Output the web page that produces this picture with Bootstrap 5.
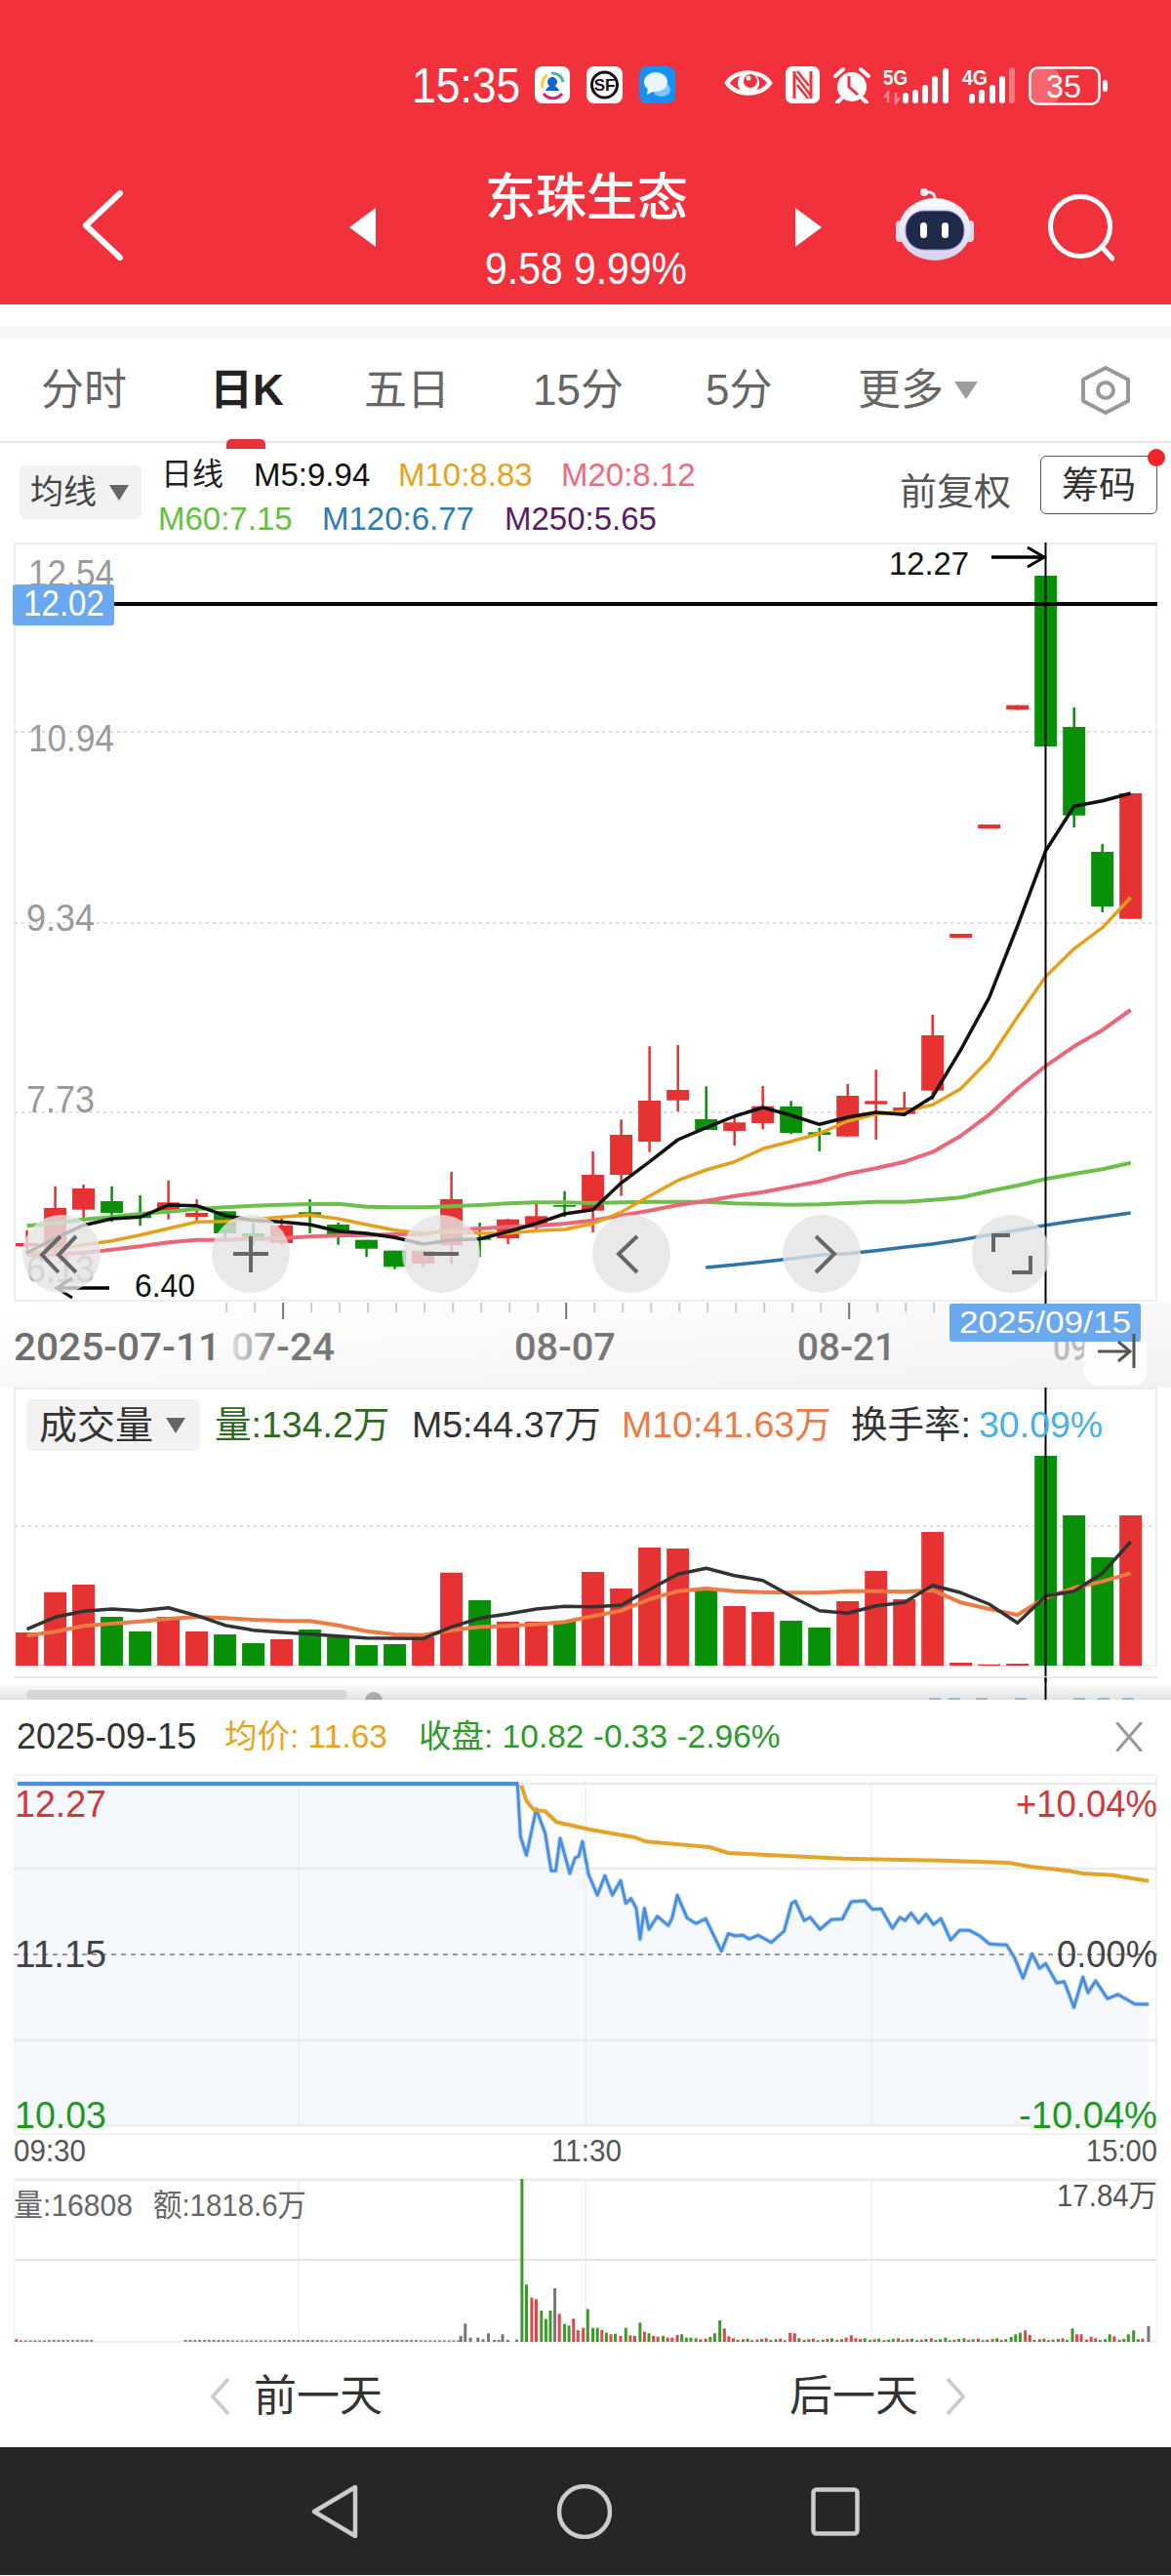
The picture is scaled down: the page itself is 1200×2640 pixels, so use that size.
<!DOCTYPE html>
<html lang="zh-CN">
<head>
<meta charset="utf-8">
<title>东珠生态</title>
<link href="https://cdn.jsdelivr.net/npm/bootstrap@5.3.0/dist/css/bootstrap.min.css" rel="stylesheet">
<style>
html,body{margin:0;background:#fff;}
body{width:1200px;height:2640px;overflow:hidden;font-family:"Liberation Sans","Noto Sans CJK SC",sans-serif;}
.app-head{height:312px;background:#f1323c;color:#fff;}
.status-row{height:40px;padding:68px 0 0 422px;box-sizing:content-box;}
.status-time{font-size:50px;line-height:40px;width:111px;white-space:nowrap;transform:scaleX(.89);transform-origin:0 50%;}
.status-icons{display:grid;grid-template-columns:53px 54px 87px 63px 48px 52px auto;margin-left:15px;}
.title-row{display:grid;grid-template-columns:274px 139px 318px 103px 156px 66px;padding-left:84px;margin-top:60px;align-items:start;}
.title-block{text-align:center;width:207px;}
.title-name{font-size:52px;line-height:70px;white-space:nowrap;font-weight:500;}
.title-price{font-size:47px;line-height:50px;margin-top:12px;white-space:nowrap;transform:scaleX(.87);transform-origin:50% 50%;margin-left:-20px;margin-right:-20px;}
.tri-off{margin-top:45px;}
.back-off{margin-top:27px;}
.robot-off{margin-top:25px;}
.search-off{margin-top:30px;}
.gap-band{background:#fff;border-bottom:13px solid #f5f5f5;box-sizing:content-box;height:22px;}
.tabs-row{display:grid;grid-template-columns:175px 156px 173px 177px 156px 99px 129px 52px;padding-left:42px;border-bottom:2px solid #e6e6e6;align-items:center;font-size:44px;color:#666;line-height:1;box-sizing:content-box;height:105px;}
.tab-on{color:#222;font-weight:700;position:relative;margin-left:-2px;}
.tab-on::after{content:"";position:absolute;left:17px;top:72px;width:40px;height:10px;border-radius:5px 5px 0 0;background:#e5333b;}
.more-tri{width:0;height:0;border-left:12px solid transparent;border-right:12px solid transparent;border-top:18px solid #9c9c9c;}
.ma-row{height:102px;padding-left:20px;position:relative;}
.ma-btn{width:125px;height:55px;margin-top:23px;background:#f2f2f2;border-radius:6px;font-size:34px;color:#444;padding-left:11px;}
.drop-tri{width:0;height:0;border-left:10px solid transparent;border-right:10px solid transparent;border-top:16px solid #666;margin-left:13px;}
.ma-lines{margin-left:20px;padding-top:10px;font-size:33px;line-height:45px;white-space:nowrap;}
.ma-a{width:95px;font-size:32px;color:#222;}
.ma-b{width:148px;color:#111;}
.ma-c{width:167px;color:#e8a21c;}
.ma-d{color:#ee6b7e;}
.ma-e{width:168px;margin-left:-3px;color:#66c040;}
.ma-f{width:187px;color:#2f7cb0;}
.ma-g{color:#5b1c62;}
.ma-fq{position:absolute;left:922px;top:25px;font-size:38px;line-height:50px;color:#555;}
.chip-btn{position:absolute;left:1066px;top:13px;width:120px;height:60px;border:1px solid #555;border-radius:6px;font-size:38px;line-height:1;color:#333;padding:0;background:#fff;}
.chip-dot{position:absolute;left:1176px;top:6px;width:18px;height:18px;border-radius:50%;background:#f4222d;}
.chart-svg{display:block;width:1200px;}
.chart-svg text{font-family:"Liberation Sans","Noto Sans CJK SC",sans-serif;}
.chart-svg text.tx-rb{font-family:Roboto,"Liberation Sans",sans-serif;font-weight:500;}
.vol-wrap{position:relative;height:320px;}
.vol-legend{position:absolute;left:27px;top:12px;font-size:37.5px;line-height:53px;white-space:nowrap;}
.vol-btn{width:178px;height:53px;background:#f2f2f2;border-radius:6px;font-size:39px;color:#333;padding-left:13px;}
.vl-a{margin-left:15px;width:202px;color:#2d6a1c;}
.vl-b{width:215px;color:#333;}
.vl-c{width:235px;color:#ee7a45;}
.vl-d{color:#333;width:131px;}
.vl-e{color:#4ab0e8;}
.pop-head{height:76px;padding:0 29px 0 17px;font-size:33.5px;white-space:nowrap;}
.pop-date{width:213px;color:#333;font-size:36px;}
.pop-avg{width:199px;color:#e8a320;}
.pop-close{color:#2e9a2e;}
.day-nav{height:89px;padding:0 0 16px 214px;font-size:44px;color:#333;line-height:1;}
.day-text{margin:0 27px 0 23px;width:132px;white-space:nowrap;}
.day-next{margin-left:390px;}
.sys-bar{height:131px;background:#262626;}
.sys-gap{margin-left:204px;}
</style>
</head>
<body>
<header class="app-head">
  <div class="status-row d-flex">
    <div class="status-time">15:35</div>
    <div class="status-icons">
      <svg width="36" height="38" viewBox="0 0 36 38"><rect width="36" height="38" rx="8" fill="#fff"/><path d="M8 22A11 11 0 0 1 13 9" fill="none" stroke="#f3d437" stroke-width="3"/><path d="M17 7A11 11 0 0 1 29 16" fill="none" stroke="#3dbb9a" stroke-width="3"/><path d="M9 28A12 12 0 0 0 28 28" fill="none" stroke="#d8267a" stroke-width="3"/><circle cx="18" cy="16" r="5" fill="#1662c9"/><path d="M11 25C13 18 23 18 25 25Z" fill="#1662c9"/></svg>
      <svg width="37" height="38" viewBox="0 0 37 38"><rect width="37" height="38" rx="8" fill="#fff"/><circle cx="18.500" cy="19" r="13" fill="none" stroke="#111" stroke-width="3"/><text x="18.500" y="25" font-size="17" font-weight="700" text-anchor="middle" fill="#111" font-family="Liberation Sans">SF</text></svg>
      <svg width="37" height="38" viewBox="0 0 37 38"><rect width="37" height="38" rx="8" fill="#188ff2"/><ellipse cx="23" cy="24" rx="9" ry="7" fill="#7cc8f7"/><ellipse cx="17" cy="16" rx="12" ry="10" fill="#e9f6fd"/><path d="M9 22l-1 7 8-4z" fill="#e9f6fd"/></svg>
      <svg width="50" height="34" viewBox="0 0 50 34"><path d="M3 17C12 3 38 3 47 17C38 31 12 31 3 17Z" fill="none" stroke="#fff" stroke-width="4.500"/><circle cx="25" cy="17" r="11" fill="#fff"/><circle cx="27" cy="15" r="7" fill="#f1323c"/><circle cx="25" cy="12" r="2.500" fill="#fff"/></svg>
      <svg width="35" height="38" viewBox="0 0 35 38"><rect width="35" height="38" rx="7" fill="#fff"/><path d="M9 5V33M26 5V33" stroke="#f1323c" stroke-width="3" fill="none"/><path d="M9 8L26 30M12 19L23 33M12 5L24 20" stroke="#f1323c" stroke-width="2.500" fill="none"/></svg>
      <svg width="40" height="38" viewBox="0 0 40 38"><circle cx="20" cy="21" r="15" fill="#fff"/><path d="M3 10L11 3M37 10L29 3M9 33L5 37M31 33L35 37" stroke="#fff" stroke-width="4" stroke-linecap="round"/><path d="M17 10V21L26 29" fill="none" stroke="#f1323c" stroke-width="3"/></svg>
      <svg width="230" height="40" viewBox="905 68 230 40"><g fill="#fff"><text x="905" y="87" font-size="22" font-weight="700" fill="#fff" font-family="Liberation Sans" textLength="25" lengthAdjust="spacingAndGlyphs">5G</text><path d="M910 105V95l-4 5M918 95V105l4-5" stroke="#fff" stroke-opacity=".4" stroke-width="2.500" fill="none"/><rect x="925" y="95" width="6" height="11" rx="3"/><rect x="935" y="92" width="6" height="14" rx="3"/><rect x="945" y="87" width="6" height="19" rx="3"/><rect x="955" y="78" width="6" height="28" rx="3"/><rect x="966" y="70" width="6" height="36" rx="3"/><text x="986" y="87" font-size="22" font-weight="700" fill="#fff" font-family="Liberation Sans" textLength="26" lengthAdjust="spacingAndGlyphs">4G</text><rect x="993" y="96" width="6" height="10" rx="3"/><rect x="1003" y="92" width="6" height="14" rx="3"/><rect x="1014" y="87" width="6" height="19" rx="3"/><rect x="1024" y="78" width="6" height="28" rx="3"/><rect x="1034" y="69" width="6" height="37" rx="3" fill-opacity=".35"/><rect x="1057" y="71" width="28" height="34" rx="6" fill-opacity=".25"/><rect x="1055.500" y="69.500" width="71" height="37" rx="8" fill="none" stroke="#fff" stroke-width="2.500"/><text x="1090" y="100" font-size="33" text-anchor="middle" fill="#fff" font-family="Liberation Sans" textLength="36" lengthAdjust="spacingAndGlyphs">35</text><rect x="1130" y="82" width="5" height="12" rx="2.500"/></g></svg>
    </div>
  </div>
  <div class="title-row">
    <svg class="back-off" width="42" height="72" viewBox="0 0 42 72"><path d="M39 3L4 36L39 69" fill="none" stroke="#fff" stroke-width="6" stroke-linecap="round" stroke-linejoin="round"/></svg>
    <svg class="tri-off" width="27" height="40" viewBox="0 0 27 40"><path d="M27 0V40L0 20Z" fill="#fff"/></svg>
    <div class="title-block"><div class="title-name">东珠生态</div><div class="title-price">9.58 9.99%</div></div>
    <svg class="tri-off" width="27" height="40" viewBox="0 0 27 40"><path d="M0 0V40L27 20Z" fill="#fff"/></svg>
    <svg class="robot-off" width="82" height="76" viewBox="918 193 82 76"><defs><linearGradient id="rb" x1="0" y1="0" x2="0" y2="1"><stop offset="0" stop-color="#fafaff"/><stop offset="1" stop-color="#d6d3ee"/></linearGradient></defs><path d="M958 204C958 197 953 196 948 198" fill="none" stroke="#eee" stroke-width="3"/><circle cx="947" cy="197" r="4" fill="#f3f3f7"/><rect x="918" y="226" width="8" height="22" rx="4" fill="#d7d7ea"/><rect x="990" y="226" width="8" height="22" rx="4" fill="#d7d7ea"/><ellipse cx="958" cy="235" rx="37" ry="32" fill="url(#rb)"/><rect x="928" y="216" width="60" height="40" rx="19" fill="#1f2a48" stroke="#9a86e0" stroke-width="1"/><rect x="943" y="228" width="7" height="16" rx="3.500" fill="#fff"/><rect x="965" y="228" width="7" height="16" rx="3.500" fill="#fff"/></svg>
    <svg class="search-off" width="68" height="70" viewBox="1072 198 68 70"><circle cx="1105" cy="232" r="30.500" fill="none" stroke="#fff" stroke-width="5"/><path d="M1127 253L1138 265" stroke="#fff" stroke-width="5" stroke-linecap="round"/></svg>
  </div>
</header>
<div class="gap-band"></div>
<nav class="tabs-row d-grid">
  <div>分时</div><div class="tab-on">日K</div><div>五日</div><div>15分</div><div>5分</div><div>更多</div>
  <div class="more-tri"></div>
  <svg width="52" height="50" viewBox="0 0 52 50"><path d="M26 2L49 14V36L26 48L3 36V14Z" fill="none" stroke="#999" stroke-width="4" stroke-linejoin="round"/><circle cx="26" cy="25" r="8" fill="none" stroke="#999" stroke-width="4"/></svg>
</nav>
<section class="ma-row d-flex">
  <div class="ma-btn d-flex align-items-center"><span>均线</span><span class="drop-tri"></span></div>
  <div class="ma-lines">
    <div class="d-flex"><span class="ma-a">日线</span><span class="ma-b">M5:9.94</span><span class="ma-c">M10:8.83</span><span class="ma-d">M20:8.12</span></div>
    <div class="d-flex"><span class="ma-e">M60:7.15</span><span class="ma-f">M120:6.77</span><span class="ma-g">M250:5.65</span></div>
  </div>
  <div class="ma-fq">前复权</div>
  <button class="chip-btn btn" type="button">筹码</button>
  <span class="chip-dot"></span>
</section>
<svg id="kchart" class="chart-svg" height="866" viewBox="0 557 1200 866"></svg>
<section class="vol-wrap">
  <svg id="vchart" class="chart-svg" height="320" viewBox="0 1423 1200 320"></svg>
  <div class="vol-legend d-flex">
    <div class="vol-btn d-flex align-items-center"><span>成交量</span><span class="drop-tri"></span></div>
    <span class="vl-a">量:134.2万</span><span class="vl-b">M5:44.37万</span><span class="vl-c">M10:41.63万</span><span class="vl-d">换手率:</span><span class="vl-e">30.09%</span>
  </div>
</section>
<section class="pop-head d-flex align-items-center">
  <span class="pop-date">2025-09-15</span><span class="pop-avg">均价: 11.63</span><span class="pop-close">收盘: 10.82 -0.33 -2.96%</span>
  <svg class="ms-auto" width="28" height="30" viewBox="0 0 28 30"><path d="M2 1L26 29M26 1L2 29" stroke="#999" stroke-width="3" stroke-linecap="round"/></svg>
</section>
<svg id="pchart" class="chart-svg" height="601" viewBox="0 1819 1200 601"></svg>
<nav class="day-nav d-flex align-items-center">
  <svg width="23" height="40" viewBox="0 0 23 40"><path d="M20 2L4 20L20 38" fill="none" stroke="#ccc" stroke-width="4"/></svg>
  <span class="day-text">前一天</span>
  <span class="day-text day-next">后一天</span>
  <svg width="23" height="40" viewBox="0 0 23 40"><path d="M3 2L19 20L3 38" fill="none" stroke="#ccc" stroke-width="4"/></svg>
</nav>
<footer class="sys-bar d-flex align-items-center justify-content-center">
  <svg width="48" height="56" viewBox="0 0 48 56"><path d="M45 3V53L3 28Z" fill="none" stroke="#ccc" stroke-width="4.500" stroke-linejoin="round"/></svg>
  <svg class="sys-gap" width="56" height="56" viewBox="0 0 56 56"><circle cx="28" cy="28" r="26" fill="none" stroke="#ccc" stroke-width="4.500"/></svg>
  <svg class="sys-gap" width="50" height="50" viewBox="0 0 50 50"><rect x="2.500" y="2.500" width="45" height="45" rx="3" fill="none" stroke="#ccc" stroke-width="4.500"/></svg>
</footer>
<script src="https://cdn.jsdelivr.net/npm/bootstrap@5.3.0/dist/js/bootstrap.bundle.min.js"></script>
<script>
var SX=1.3067,RED='#e63232',GRN='#089008';
function X(z){return +(z/SX).toFixed(1);}
function Y3(z){return +(1000+z/3).toFixed(1);}
function Y4(z){return +(1420+z/3).toFixed(1);}
function Y5(z){return +(1740+z/3).toFixed(1);}
function Y6(z){return +(2200+z/3).toFixed(1);}
function cx(i){return 36+i*37.9;}
function T(x,y,s,size,fill,len,extra){return '<text x="'+x+'" y="'+y+'" font-size="'+size+'" fill="'+fill+'"'+(len?' textLength="'+len+'" lengthAdjust="spacingAndGlyphs"':'')+(extra?' '+extra:'')+'>'+s+'</text>';}
function L(x1,y1,x2,y2,c,w,extra){return '<line x1="'+x1+'" y1="'+y1+'" x2="'+x2+'" y2="'+y2+'" stroke="'+c+'" stroke-width="'+w+'"'+(extra?' '+extra:'')+'/>';}
function R(x,y,w,h,c,extra){return '<rect x="'+x+'" y="'+y+'" width="'+w+'" height="'+h+'" fill="'+c+'"'+(extra?' '+extra:'')+'/>';}
function P(pts,c,w,fy){var s=pts.map(function(p){return X(p[0])+','+fy(p[1]);}).join(' ');return '<polyline points="'+s+'" fill="none" stroke="'+c+'" stroke-width="'+w+'" stroke-linejoin="round"/>';}
function seq(a){return a.map(function(y,i){return [cx(i),y];});}

/* K chart */
var k=[];
k.push('<defs><linearGradient id="axg" x1="0" y1="0" x2="1" y2="1"><stop offset="0" stop-color="#fff"/><stop offset="1" stop-color="#f2f2f2"/></linearGradient><linearGradient id="fade" x1="0" y1="0" x2="1" y2="0"><stop offset="0" stop-color="#ddd"/><stop offset=".5" stop-color="#777"/></linearGradient></defs>');
k.push(R(0,1336,1200,87,'url(#axg)'));
k.push('<rect x="15" y="558" width="1170" height="776" fill="#fff" stroke="#eee" stroke-width="2"/>');
[751,947,1141].forEach(function(y){k.push(L(15,y,1185,y,'#ddd',2,'stroke-dasharray="3 4"'));});
k.push(T(29,602,'12.54',39,'#9a9a9a',88));
k.push(T(29,771,'10.94',39,'#9a9a9a',88));
k.push(T(27,955,'9.34',39,'#9a9a9a',70));
k.push(T(27,1141,'7.73',39,'#9a9a9a',70));
k.push(T(27,1315,'6.13',39,'#9a9a9a',70));
var cs=[
[825,835,785,860,1],[717,850,650,860,1],[657,722,645,760,1],[696,732,650,760,0],[733,748,678,772,0],[700,730,632,752,1],[732,744,690,760,1],[727,795,727,810,0],[795,810,765,830,0],[770,825,750,830,1],
[730,745,690,795,0],[768,800,762,830,0],[815,842,815,868,0],[848,898,848,905,0],[848,888,848,898,1],[690,832,606,888,1],[810,815,762,868,0],[752,810,750,828,1],[742,775,705,790,1],[708,713,665,745,0],
[615,725,543,792,1],[492,615,445,680,1],[387,513,220,545,1],[354,386,216,420,1],[444,477,343,477,0],[454,480,438,525,1],[404,456,342,475,1],[405,486,388,490,0],[484,492,470,543,0],[372,497,336,497,1],
[388,398,292,507,1],[408,428,360,435,1],[186,356,123,385,1],[-126,-114,-126,-114,1],[-462,-450,-462,-450,1],[-829,-815,-829,-815,1],[-1227,-702,-1227,-702,0],[-762,-490,-822,-453,0],[-378,-210,-402,-192,0],[-558,-172,-558,-172,1]];
cs.forEach(function(c,i){var x=X(cx(i)),col=c[4]?RED:GRN;k.push(L(x,Y3(c[2]),x,Y3(c[3]),col,2.5));k.push(R(x-11.5,Y3(c[0]),23,+(Y3(c[1])-Y3(c[0])).toFixed(1),col));});
k.push(P(seq([772,765,752,745,735,728,720,715,710,707,705,704,713,715,715,712,708,703,700,700,702,700,698,698,698,703,705,707,706,702,698,698,692,685,665,648,628,612,598,578]),'#6cbf4b',4,Y3));
k.push(P([[945,900],[983,892],[1021,883],[1059,873],[1097,862],[1135,857],[1173,848],[1210,838],[1248,828],[1286,815],[1324,800],[1362,785],[1400,770],[1438,757],[1476,745],[1514,732]],'#2f74a8',3.5,Y3));
k.push(P(seq([862,860,855,845,835,823,815,815,812,810,805,802,800,798,797,785,780,775,772,765,755,740,725,708,695,680,668,652,635,612,595,575,545,495,430,350,280,220,170,108]),'#ea6779',4,Y3));
k.push(P(seq([860,845,830,818,800,780,760,758,752,745,738,750,768,785,795,790,795,795,787,783,765,730,680,632,600,575,535,512,488,450,428,420,400,350,260,130,5,-80,-145,-238]),'#e6a01c',3.5,Y3));
k.push(P(seq([855,810,770,750,745,708,710,740,755,760,768,788,795,808,828,815,812,790,765,735,722,640,575,507,470,435,408,432,460,438,423,430,375,230,70,-150,-382,-518,-535,-558]),'#111',3.5,Y3));
k.push(L(117,620,1186,620,'#000',4));
k.push(L(1071.5,557,1071.5,1334,'#000',2));
k.push(R(13,600,104,42,'#6aa8f0','rx="3"'));
k.push(T(24,632,'12.02',36,'#fff',83));
k.push(T(911,590,'12.27',34,'#111',82));
k.push(L(1016,572,1070,572,'#000',3.5));
k.push('<path d="M1053 562L1070 572L1053 582" fill="none" stroke="#000" stroke-width="3"/>');
k.push(T(138,1330,'6.40',33,'#111',62));
k.push(L(60,1321,112,1321,'#000',3.5));
k.push('<path d="M74 1311L58 1321L74 1331" fill="none" stroke="#000" stroke-width="3"/>');
[63,257,452,647,842,1036].forEach(function(x){k.push('<circle cx="'+x+'" cy="1286" r="40" fill="#e4e4e4" fill-opacity=".8"/>');});
k.push('<g fill="none" stroke="#666" stroke-width="4"><path d="M62 1268L43 1287L60 1305M78 1268L60 1287L78 1305"/><path d="M239 1286H275M257 1268V1305"/><path d="M434 1286H470"/><path d="M653 1268L634 1286L653 1305"/><path d="M836 1268L855 1286L836 1305"/><path d="M1035 1267H1018V1284M1037 1305H1056V1288"/></g>');
for(var i=7;i<=33;i++){var zx=cx(i)+2;var major=(i===9||i===19||i===29);k.push(L(X(zx),1336,X(zx),major?1353:1346,major?'#777':'#ccc',2));}
k.push(T(14,1395,'2025-07-11',38,'#6f6f6f',212,'class="tx-rb"'));
k.push(T(237,1395,'07-24',38,'url(#fade)',106,'class="tx-rb"'));
k.push(T(527,1395,'08-07',38,'#777',104,'class="tx-rb"'));
k.push(T(817,1395,'08-21',38,'#777',101,'class="tx-rb"'));
k.push(T(1079,1395,'09',38,'#bbb',36,'class="tx-rb"'));
k.push(R(1111,1367,64,54,'#fff','rx="14" fill-opacity=".9"'));
k.push(R(973,1337,196,39,'#6aa8f0','rx="3"'));
k.push(T(983,1367,'2025/09/15',32,'#fff',176));
k.push('<g fill="none" stroke="#555" stroke-width="3"><path d="M1125 1386H1157M1146 1376L1158 1386L1146 1396"/><path d="M1162 1368V1403"/></g>');
k.push(L(1071.5,1334,1071.5,1337,'#000',2));
document.getElementById('kchart').innerHTML=k.join('');

/* Volume */
var v=[];
v.push('<defs><linearGradient id="shd" x1="0" y1="0" x2="0" y2="1"><stop offset="0" stop-color="#fff"/><stop offset="1" stop-color="#e2e2e2"/></linearGradient></defs>');
v.push('<rect x="15" y="1424" width="1170" height="284" fill="#fff" stroke="#eee" stroke-width="2"/>');
v.push(L(15,1565,1185,1565,'#ddd',2,'stroke-dasharray="3 4"'));
var vb=[[762,1],[638,1],[615,1],[714,0],[759,0],[714,1],[759,1],[768,0],[795,0],[783,1],[753,0],[775,0],[801,0],[798,0],[775,1],[578,1],[663,0],[729,1],[729,1],[726,0],[576,1],[627,1],[501,1],[504,1],[630,0],[681,1],[699,1],[726,0],[747,0],[666,1],[573,1],[660,1],[453,1],[855,1],[860,1],[858,1],[219,0],[402,0],[531,0],[402,1]];
vb.forEach(function(b,i){var t=Y4(b[0]);v.push(R(X(cx(i))-11.5,t,23,+(1708-t).toFixed(1),b[1]?RED:GRN));});
v.push(P(seq([772,760,742,735,728,720,714,718,723,726,727,740,758,768,770,755,745,742,737,730,712,695,660,635,627,635,638,640,640,635,635,637,632,670,690,708,655,625,605,580]),'#ee7a45',4,Y4));
v.push(P(seq([752,715,697,690,695,686,710,740,755,762,767,773,779,780,781,745,718,705,690,682,683,678,630,583,565,587,602,650,695,703,680,670,617,640,675,733,650,635,580,483]),'#333',3.5,Y4));
v.push(L(1071.5,1423,1071.5,1743,'#000',2));
v.push(R(0,1725,1200,18,'url(#shd)'));
v.push(L(14,1720,1186,1720,'#e8e8e8',2));
v.push(R(27,1733,329,10,'#d6d6d6','rx="5"'));
v.push('<circle cx="383" cy="1744" r="9" fill="#aaa"/>');
[952,972,1000,1040,1100,1125,1150].forEach(function(x){v.push(R(x,1741,12,2,'#9db8d4'));});
v.push(L(1071.5,1720,1071.5,1743,'#000',2));
document.getElementById('vchart').innerHTML=v.join('');

/* Intraday */
var blue=[[24,268],[693,268],[697,430],[705,487],[718,345],[730,420],[738,535],[744,535],[750,435],[763,543],[770,495],[775,490],[780,445],[788,545],[800,610],[810,550],[820,610],[831,565],[838,635],[845,620],[852,650],[857,745],[863,650],[869,715],[880,675],[895,703],[900,680],[907,610],[920,680],[932,697],[945,682],[955,730],[966,782],[975,728],[985,735],[995,733],[1003,745],[1015,733],[1033,755],[1050,720],[1060,635],[1065,628],[1077,688],[1085,678],[1098,715],[1113,685],[1128,683],[1140,630],[1158,627],[1168,653],[1180,652],[1195,712],[1205,678],[1212,688],[1220,665],[1230,695],[1240,668],[1250,700],[1260,682],[1273,748],[1285,718],[1298,718],[1312,735],[1325,760],[1348,763],[1358,800],[1370,865],[1382,790],[1392,835],[1400,820],[1415,880],[1425,875],[1438,955],[1450,862],[1457,910],[1467,873],[1483,928],[1497,915],[1520,945],[1538,945]];
var avg=[[698,272],[705,320],[715,347],[730,352],[745,385],[790,408],[850,432],[865,445],[950,462],[975,480],[1060,490],[1130,497],[1190,500],[1260,503],[1350,510],[1380,522],[1430,535],[1450,543],[1490,548],[1538,566]];
var p=[];
p.push('<rect x="15" y="1820" width="1170" height="368" fill="#fff" stroke="#f2f2f2" stroke-width="2"/>');
var fill=blue.map(function(q){return X(q[0])+','+Y5(q[1]);}).join(' ');
p.push('<polygon points="15,1829 '+fill+' 1177,2179 15,2179" fill="#f5f9fe"/>');
[1829,1916,2092,2179].forEach(function(y){p.push(L(14,y,1186,y,'#ececec',2.5));});
[306,600,893].forEach(function(x){p.push(L(x,1829,x,2179,'#e6e6e6',1));});
p.push(L(14,2004,1186,2004,'#999',2,'stroke-dasharray="5 5"'));
p.push(P(blue,'#c9def6',5,Y5));
p.push(P(blue,'#4a8fe0',3,Y5));
p.push(L(18,1829,531,1829,'#4a8fe0',4));
p.push(P(avg,'#e6a32a',4,Y5));
p.push(T(15,1863,'12.27',39,'#d0383c',94));
p.push(T(1041,1863,'+10.04%',39,'#d0383c',145));
p.push(T(15,2017,'11.15',39,'#444',94));
p.push(T(1083,2017,'0.00%',39,'#444',103));
p.push(T(15,2182,'10.03',39,'#1e9a1e',94));
p.push(T(1044,2182,'-10.04%',39,'#1e9a1e',142));
p.push(T(14,2216,'09:30',32,'#555',74));
p.push(T(565,2216,'11:30',32,'#555',72));
p.push(T(1113,2216,'15:00',32,'#555',73));
/* volume under intraday */
p.push(L(14,2235,1186,2235,'#eee',3));
p.push(L(14,2317,1186,2317,'#e6e6e6',2));
p.push(L(14,2401,1186,2401,'#eee',2));
p.push(L(14.5,2235,14.5,2401,'#eee',1));
p.push(L(1185.5,2235,1185.5,2401,'#eee',1));
[306,600,893].forEach(function(x){p.push(L(x,2235,x,2401,'#e6e6e6',1));});
var G='#3a9a2a',Rr='#e0464a',Y='#777';
function bar(z,t,c){var y=Y6(t);p.push(R(X(z)-1.5,y,3,+(2401-y).toFixed(1),c));}
bar(22,595,Rr);
for(var zz=28;zz<615;zz+=6.3){var n=Math.round(zz*7)%11;if(n>1)bar(zz,597+(n%2),'#888');}
[[617,585],[623,547],[630,590],[640,590],[647,595],[654,577],[662,597],[668,597],[673,580],[680,597],[692,596]].forEach(function(b){bar(b[0],b[1],Y);});
bar(699,102,G);
[[705,427,G],[712,467,Rr],[718,472,Rr],[725,507,G],[731,533,G],[737,507,G],[743,438,Y],[749,517,Rr],[756,548,G],[762,553,G],[768,532,Rr],[774,567,Rr],[781,560,Rr],[787,502,G],[794,560,G],[800,560,G],[806,567,Rr],[812,575,G],[818,580,Rr],[824,578,G],[831,585,Rr],[838,560,G],[844,583,Rr],[850,585,Rr],[857,544,G],[863,572,Rr],[869,577,G],[875,585,Rr],[881,587,Rr],[888,585,G],[894,590,Rr],[900,590,Rr],[907,582,Rr],[913,580,G],[919,590,G],[925,590,G],[932,592,G],[938,595,Rr],[945,593,Rr],[951,588,G],[957,577,G],[964,537,G],[970,562,Rr],[976,586,Rr]].forEach(function(b){bar(b[0],b[1],b[2]);});
var peak={1059:[575,Rr],1065:[577,Rr],1134:[590,Rr],1140:[583,Rr],1146:[592,Rr],1268:[590,G],1353:[588,G],1360:[580,G],1367:[575,G],1374:[568,Rr],1380:[582,Rr],1438:[562,G],1445:[580,Rr],1462:[587,Rr],1487:[580,G],1493:[586,Rr],1512:[580,G],1519:[568,G]};
for(var idx=0;idx<88;idx++){var z6=Math.round(982+idx*6.3);var pk=null;for(var kk in peak){if(Math.abs(kk-z6)<=3)pk=peak[kk];}
 if(pk){bar(z6,pk[0],pk[1]);}else{var h=592+((idx*5)%7);bar(z6,h,(idx*3)%5<2?Rr:G);}}
bar(1538,555,Y);
p.push(T(14,2272,'量:16808',32,'#666',122));
p.push(T(157,2272,'额:1818.6万',32,'#666',157));
p.push(T(1083,2262,'17.84万',32,'#555',103));
document.getElementById('pchart').innerHTML=p.join('');
</script>
</body>
</html>
